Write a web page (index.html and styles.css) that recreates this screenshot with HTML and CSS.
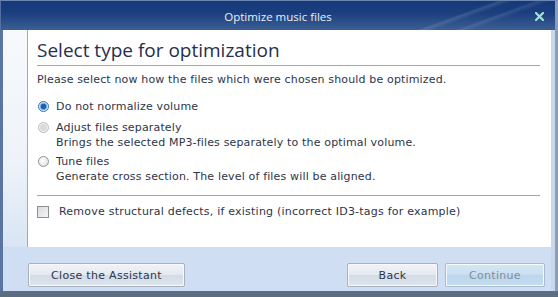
FILE: index.html
```html
<!DOCTYPE html>
<html>
<head>
<meta charset="utf-8">
<link rel="stylesheet" href="styles.css">
</head>
<body>
<div class="window">
  <div class="titlebar">
    <span class="title">Optimize music files</span>
    <svg class="close" width="9" height="9" viewBox="0 0 9 9"><path d="M1 1L8 8M8 1L1 8" stroke="#a6e0de" stroke-width="2.2" stroke-linecap="square"/></svg>
  </div>
  <div class="body">
    <div class="panel">
      <div class="strip"></div>
      <div class="content">
        <h1 class="heading">Select type for optimization</h1>
        <p class="intro">Please select now how the files which were chosen should be optimized.</p>
        <div class="options">
          <div class="option">
            <span class="radio checked"></span>
            <div class="opt-text">
              <div class="opt-label">Do not normalize volume</div>
            </div>
          </div>
          <div class="option second">
            <span class="radio dim"></span>
            <div class="opt-text">
              <div class="opt-label">Adjust files separately</div>
              <div class="opt-desc">Brings the selected MP3-files separately to the optimal volume.</div>
            </div>
          </div>
          <div class="option third">
            <span class="radio"></span>
            <div class="opt-text">
              <div class="opt-label">Tune files</div>
              <div class="opt-desc">Generate cross section. The level of files will be aligned.</div>
            </div>
          </div>
        </div>
        <div class="check-row">
          <span class="checkbox"></span>
          <span class="check-label">Remove structural defects, if existing (incorrect ID3-tags for example)</span>
        </div>
      </div>
    </div>
    <div class="footer">
      <button class="btn btn-close">Close the Assistant</button>
      <div class="nav">
        <button class="btn btn-back">Back</button>
        <button class="btn btn-continue">Continue</button>
      </div>
    </div>
  </div>
</div>
</body>
</html>
```
FILE: styles.css
```css
html, body {
  margin: 0;
  padding: 0;
  background: #5d6d80;
  overflow: hidden;
}
.window {
  width: 558px;
  height: 293px;
  display: flex;
  flex-direction: column;
  font-family: "DejaVu Sans", Verdana, sans-serif;
  color: #2d3549;
  box-sizing: border-box;
  border-bottom: 2px solid #5d6f88;
  background: #cfdef2;
}
.titlebar {
  height: 30px;
  flex: none;
  position: relative;
  display: flex;
  align-items: center;
  justify-content: center;
  background:
    linear-gradient(160deg, transparent 78%, rgba(255,255,255,0.12) 79%, transparent 81%, transparent 84%, rgba(255,255,255,0.10) 85%, transparent 87%),
    linear-gradient(#163879 0%, #1b3f7e 40%, #3b5e93 100%);
  border-top: 1px solid #6d86b2;
  box-sizing: border-box;
  border-left: 1px solid #5470a0;
  border-right: 3px solid #8b9cb5;
}
.title {
  font-family: "Open Sans", "Noto Sans", sans-serif;
  font-size: 11.5px;
  color: #e9eef6;
  margin-top: 1px;
}
.close {
  position: absolute;
  right: 11px;
  top: 11px;
}
.body {
  flex: 1;
  display: flex;
  flex-direction: column;
  border-left: 3px solid #5a75a2;
  border-right: 3px solid #8e9db2;
  box-shadow: inset -4px 0 0 #c9d7ea;
}
.panel {
  height: 217px;
  display: flex;
  flex: none;
}
.strip {
  width: 24px;
  background: linear-gradient(#f7f9fc 0%, #eef3f9 60%, #d9e5f4 100%);
}
.content {
  flex: 1;
  background: #fff;
  border-left: 1px solid #a3a9b3;
  margin-right: 4px;
  padding: 0 11px 0 9px;
}
.heading {
  font-family: "Open Sans", "Noto Sans", sans-serif;
  font-weight: normal;
  font-size: 19px;
  color: #262f4d;
  margin: 8px 0 0 0;
  line-height: 24px;
  padding-bottom: 3px;
  border-bottom: 1px solid #a5a5a5;
}
.intro {
  font-size: 11px;
  letter-spacing: 0.15px;
  margin: 7px 0 0 0;
  line-height: 14px;
}
.options {
  margin-top: 12px;
  display: flex;
  flex-direction: column;
  padding-bottom: 11px;
  border-bottom: 1px solid #a5a5a5;
}
.option {
  display: flex;
  align-items: flex-start;
}
.option.second { margin-top: 6px; }
.option.third { margin-top: 4px; }
.radio {
  width: 9px;
  height: 9px;
  border-radius: 50%;
  border: 1px solid #8e949c;
  background: radial-gradient(circle at 40% 40%, #fff, #d7d9dc);
  margin: 2px 7px 0 1px;
  flex: none;
}
.radio.checked {
  border-color: #3f6fa6;
  background: radial-gradient(circle, #1d5fb1 0 2.5px, #6aa8e4 3px, #cde0f4 4px, #eef4fb 5px);
}
.radio.dim {
  border-color: #b8bcc2;
  background: radial-gradient(circle, #d8dadd 0 3px, #f0f1f2 4px);
}
.opt-label, .opt-desc {
  font-size: 11px;
  letter-spacing: 0.16px;
  line-height: 15px;
}
.check-row {
  display: flex;
  align-items: center;
  margin-top: 9px;
}
.checkbox {
  width: 10px;
  height: 10px;
  border: 1px solid #8a8f96;
  background: linear-gradient(135deg, #d8dadd, #f4f5f6);
  margin-right: 10px;
  flex: none;
}
.check-label {
  font-size: 11px;
  letter-spacing: 0.22px;
}
.footer {
  flex: 1;
  display: flex;
  justify-content: space-between;
  align-items: flex-start;
  padding: 16px 10px 0 25px;
}
.nav {
  display: flex;
  gap: 7px;
}
.btn {
  font-family: "DejaVu Sans", Verdana, sans-serif;
  font-size: 11px;
  letter-spacing: 0.3px;
  color: #2d3549;
  height: 24px;
  border: 1px solid #a7b1be;
  border-radius: 2px;
  background: linear-gradient(#f0f4f8 0%, #e3e9f0 50%, #d3dce6 51%, #dde5ee 100%);
  box-shadow: inset 0 0 0 1px #f7f9fb;
  padding: 0;
}
.btn-close { width: 157px; }
.btn-back { width: 91px; }
.btn-continue {
  width: 100px;
  color: #7c8ea0;
  background: linear-gradient(#d4e6f4 0%, #c9dff1 50%, #bcd6ec 51%, #c6dcef 100%);
  border-color: #a9bccf;
}
```
